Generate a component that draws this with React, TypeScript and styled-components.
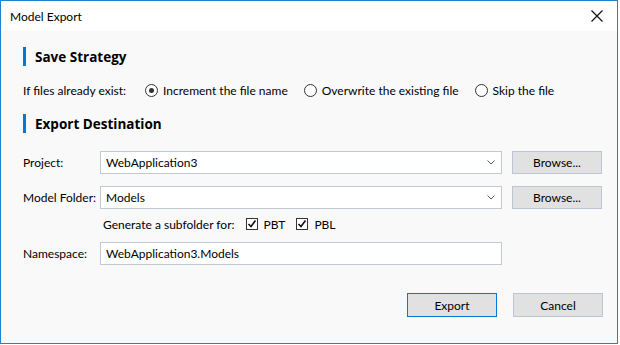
import styled, { createGlobalStyle } from 'styled-components'

const GlobalStyle = createGlobalStyle`
  html, body {
    margin: 0;
    padding: 0;
    background: #ffffff;
  }
  body {
    font-family: Lato, 'Open Sans', sans-serif;
    font-size: 12px;
    color: #000000;
  }
`

const Window = styled.div`
  display: flex;
  flex-direction: column;
  box-sizing: border-box;
  width: 618px;
  height: 344px;
  border: 1px solid #1883d7;
  background: #f9f9f9;
`

const TitleBar = styled.div`
  display: flex;
  align-items: center;
  justify-content: space-between;
  height: 30px;
  padding: 0 14px 0 9px;
  background: #ffffff;
`

const Title = styled.span`
  font-size: 12px;
`

const Body = styled.div`
  flex: 1;
  display: flex;
  flex-direction: column;
  padding: 16px 14px 0 22px;
`

const SectionHeading = styled.div<{ $top?: number }>`
  display: flex;
  align-items: center;
  height: 19px;
  margin-top: ${(p) => p.$top ?? 0}px;
  padding-left: 9px;
  border-left: 3px solid #0078d7;
  font-family: 'Open Sans', Lato, sans-serif;
  font-size: 13.5px;
  font-weight: 700;
`

const RadioRow = styled.div`
  display: flex;
  align-items: center;
  height: 20px;
  margin-top: 14px;
`

const RowLabel = styled.span<{ $width: number }>`
  width: ${(p) => p.$width}px;
  flex-shrink: 0;
`

const RadioOption = styled.label`
  display: flex;
  align-items: center;
  gap: 5px;
  margin-right: 16px;
`

const RadioCircle = styled.span<{ $checked?: boolean }>`
  position: relative;
  box-sizing: border-box;
  width: 13px;
  height: 13px;
  border: 1px solid #333333;
  border-radius: 50%;
  background: #ffffff;

  &::after {
    content: '';
    display: ${(p) => (p.$checked ? 'block' : 'none')};
    position: absolute;
    left: 3px;
    top: 3px;
    width: 5px;
    height: 5px;
    border-radius: 50%;
    background: #333333;
  }
`

const FormGrid = styled.div`
  display: grid;
  grid-template-columns: 77px 402px 90px;
  margin-top: 18px;
`

const FieldLabel = styled.span`
  display: flex;
  align-items: center;
  height: 23px;
`

const FieldBox = styled.div`
  display: flex;
  align-items: center;
  justify-content: space-between;
  box-sizing: border-box;
  height: 23px;
  padding: 0 6px 0 5px;
  background: #ffffff;
  border: 1px solid #c2c8d4;
`

const Browse = styled.button`
  box-sizing: border-box;
  height: 23px;
  margin-left: 10px;
  width: 90px;
  padding: 0;
  font: inherit;
  color: #000000;
  background: #e1e1e1;
  border: 1px solid #bcc5d5;
`

const Gap = styled.div<{ $h: number }>`
  grid-column: 1 / -1;
  height: ${(p) => p.$h}px;
`

const SubfolderRow = styled.div`
  grid-column: 2 / -1;
  display: flex;
  align-items: center;
  height: 16px;
  padding-left: 3px;
`

const CheckOption = styled.label`
  display: flex;
  align-items: center;
  gap: 6px;
  margin-left: 11px;
`

const CheckBox = styled.span`
  display: flex;
  align-items: center;
  justify-content: center;
  box-sizing: border-box;
  width: 12px;
  height: 12px;
  border: 1px solid #333333;
  background: #ffffff;
`

const Footer = styled.div`
  display: flex;
  justify-content: flex-end;
  gap: 16px;
  margin-top: 28px;
`

const DialogButton = styled.button<{ $primary?: boolean }>`
  box-sizing: border-box;
  width: 90px;
  height: 24px;
  padding: 0;
  font: inherit;
  color: #000000;
  background: #e1e1e1;
  border: 1px solid ${(p) => (p.$primary ? '#0078d7' : '#bcc5d5')};
`

function Chevron() {
  return (
    <svg width="8" height="5" viewBox="0 0 8 5">
      <path d="M0.5 0.5 L4 4 L7.5 0.5" fill="none" stroke="#5a5a5a" strokeWidth="1" />
    </svg>
  )
}

function Check() {
  return (
    <svg width="10" height="10" viewBox="0 0 10 10">
      <path d="M1.5 5 L4 7.5 L8.5 1.5" fill="none" stroke="#111111" strokeWidth="1.6" />
    </svg>
  )
}

export default function App() {
  return (
    <>
      <GlobalStyle />
      <Window>
        <TitleBar>
          <Title>Model Export</Title>
          <svg width="12" height="12" viewBox="0 0 12 12">
            <path d="M0.5 0.5 L11.5 11.5 M11.5 0.5 L0.5 11.5" stroke="#111111" strokeWidth="1.2" />
          </svg>
        </TitleBar>
        <Body>
          <SectionHeading>Save Strategy</SectionHeading>
          <RadioRow>
            <RowLabel $width={122}>If files already exist:</RowLabel>
            <RadioOption>
              <RadioCircle $checked />
              Increment the file name
            </RadioOption>
            <RadioOption>
              <RadioCircle />
              Overwrite the existing file
            </RadioOption>
            <RadioOption>
              <RadioCircle />
              Skip the file
            </RadioOption>
          </RadioRow>

          <SectionHeading $top={14}>Export Destination</SectionHeading>
          <FormGrid>
            <FieldLabel>Project:</FieldLabel>
            <FieldBox>
              WebApplication3
              <Chevron />
            </FieldBox>
            <Browse>Browse...</Browse>
            <Gap $h={12} />
            <FieldLabel>Model Folder:</FieldLabel>
            <FieldBox>
              Models
              <Chevron />
            </FieldBox>
            <Browse>Browse...</Browse>
            <Gap $h={7} />
            <SubfolderRow>
              Generate a subfolder for:
              <CheckOption>
                <CheckBox>
                  <Check />
                </CheckBox>
                PBT
              </CheckOption>
              <CheckOption>
                <CheckBox>
                  <Check />
                </CheckBox>
                PBL
              </CheckOption>
            </SubfolderRow>
            <Gap $h={10} />
            <FieldLabel>Namespace:</FieldLabel>
            <FieldBox>WebApplication3.Models</FieldBox>
          </FormGrid>
          <Footer>
            <DialogButton $primary>Export</DialogButton>
            <DialogButton>Cancel</DialogButton>
          </Footer>
        </Body>
      </Window>
    </>
  )
}
